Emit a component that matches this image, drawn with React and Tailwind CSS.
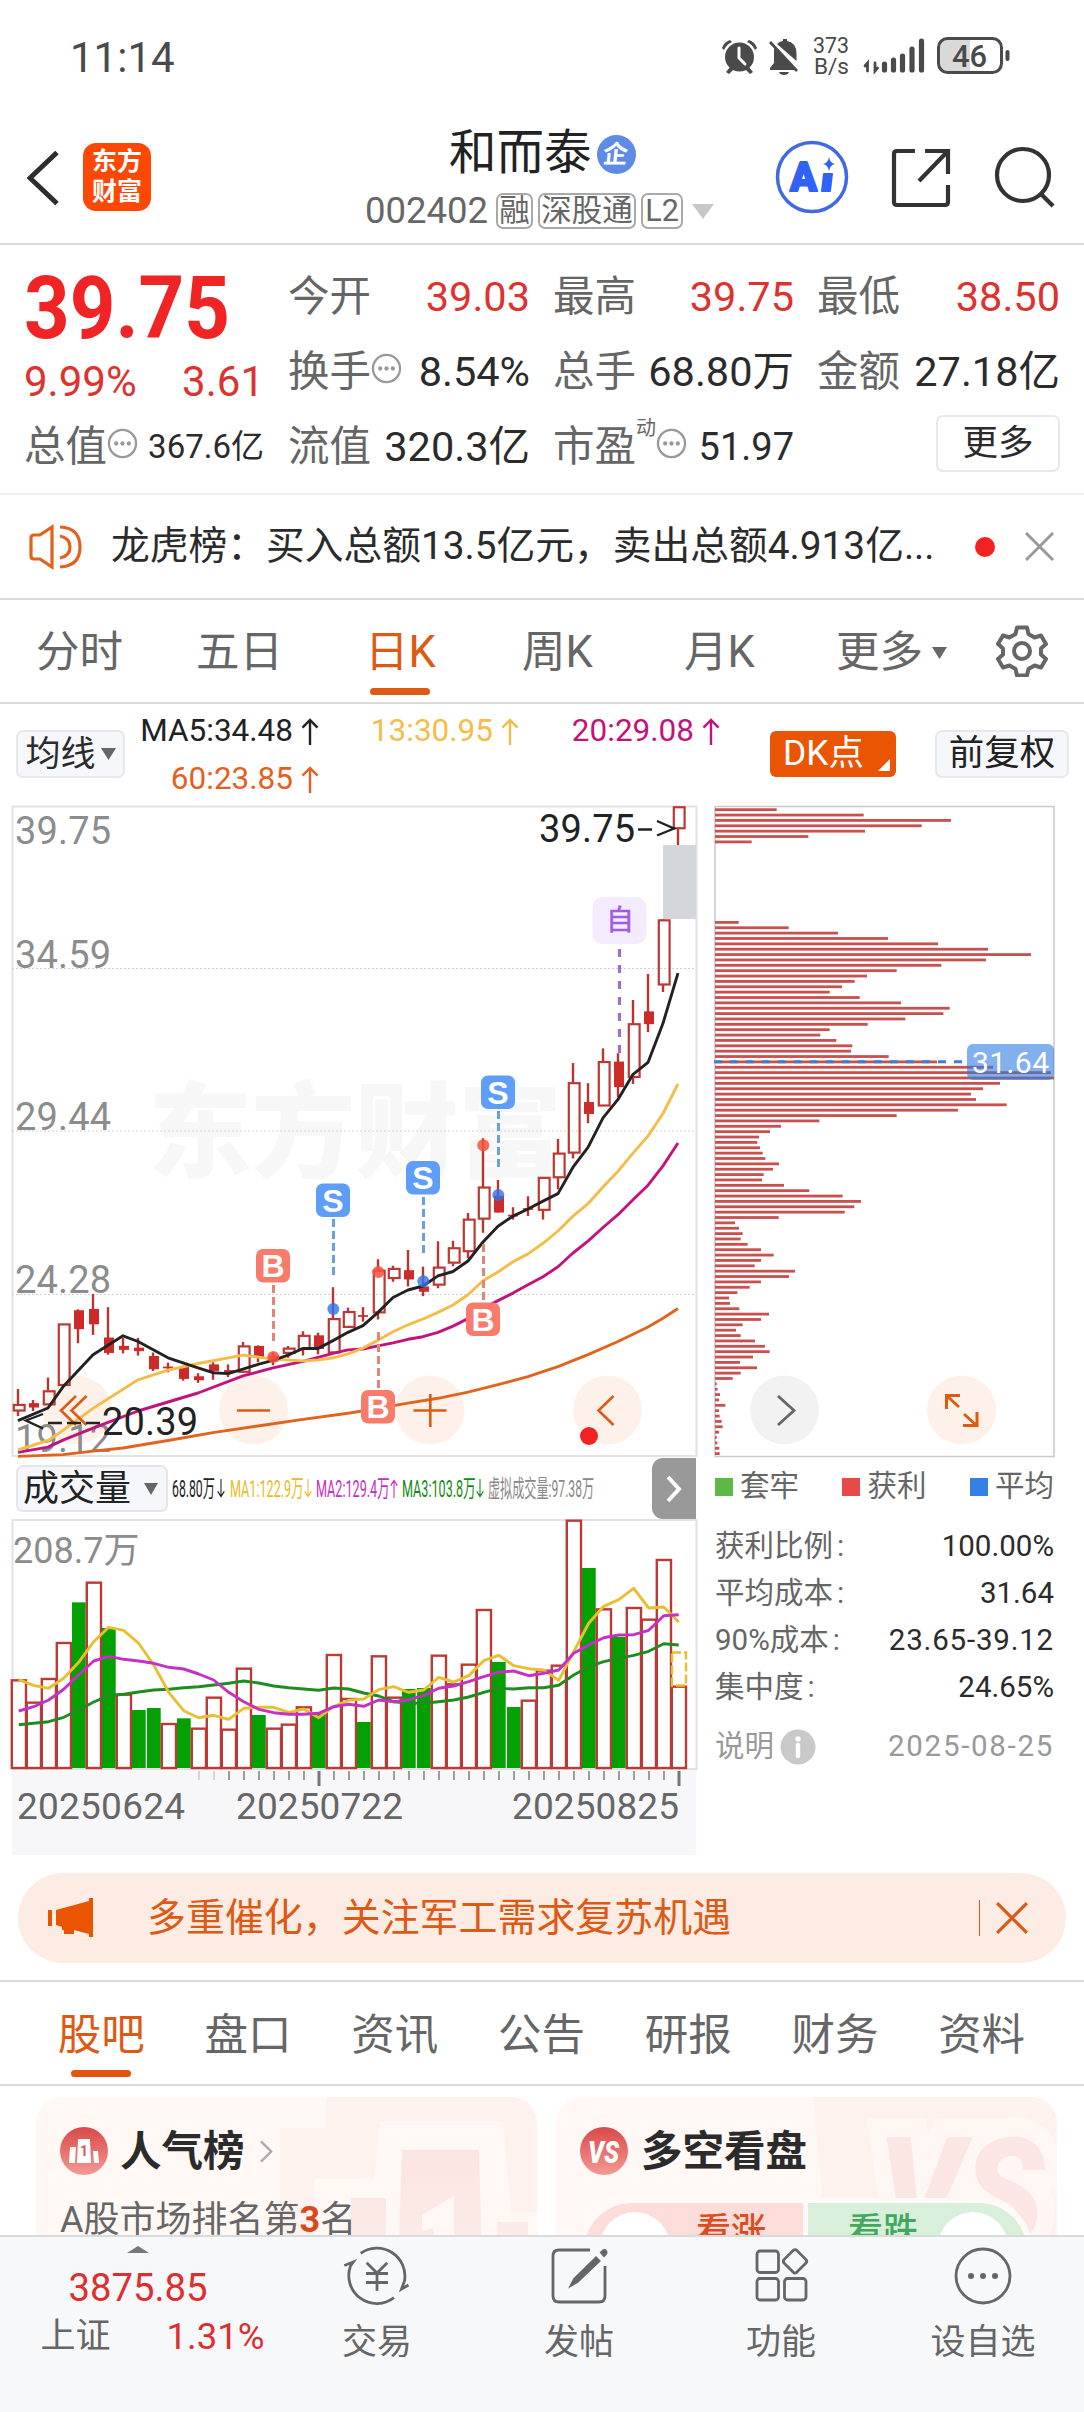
import React from "react";

const ORANGE = "#ea5504";

// [high, low, bodyTop, bodyBottom, kind]  h = hollow, f = filled
const CANDLES = [
  [1361, 1422, 1396, 1411, "h"], [1386, 1411, 1393, 1403, "f"], [1335, 1397, 1365, 1397, "h"],
  [1213, 1353, 1213, 1353, "h"], [1180, 1257, 1182, 1225, "f"], [1145, 1238, 1179, 1214, "f"],
  [1175, 1283, 1244, 1279, "f"], [1245, 1280, 1263, 1272, "f"], [1245, 1285, 1267, 1275, "f"],
  [1278, 1320, 1286, 1316, "f"], [1301, 1323, 1310, 1314, "f"], [1308, 1342, 1310, 1338, "f"],
  [1325, 1347, 1332, 1341, "f"], [1300, 1340, 1305, 1320, "f"], [1305, 1334, 1318, 1324, "f"],
  [1254, 1324, 1263, 1323, "h"], [1262, 1300, 1263, 1288, "f"], [1278, 1307, 1285, 1298, "f"],
  [1263, 1290, 1268, 1280, "h"], [1230, 1285, 1239, 1271, "h"], [1233, 1282, 1239, 1270, "f"],
  [1130, 1280, 1201, 1279, "h"], [1176, 1221, 1185, 1221, "h"], [1175, 1208, 1193, 1197, "f"],
  [1066, 1203, 1091, 1188, "h"], [1081, 1117, 1087, 1110, "h"], [1045, 1128, 1091, 1112, "f"],
  [1083, 1150, 1128, 1140, "f"], [1025, 1132, 1084, 1125, "h"], [1024, 1082, 1040, 1075, "h"],
  [961, 1064, 975, 1049, "h"], [791, 1006, 902, 975, "h"], [886, 960, 922, 960, "f"],
  [948, 976, 965, 969, "f"], [923, 968, 950, 954, "f"], [880, 976, 880, 955, "h"],
  [793, 907, 825, 881, "h"], [620, 837, 665, 825, "h"], [666, 757, 709, 736, "f"],
  [587, 718, 617, 718, "h"], [598, 698, 617, 675, "f"], [477, 668, 531, 653, "h"],
  [418, 550, 503, 532, "f"], [293, 459, 295, 443, "h"], [38, 125, 38, 88, "h"],
];

const MA5 = [[0, 1433], [2, 1404], [3, 1356], [5, 1283], [7, 1240], [8, 1253], [10, 1290], [12, 1313], [13, 1324], [14, 1326], [15, 1316], [16, 1305], [17, 1296], [18, 1284], [19, 1269], [20, 1269], [21, 1251], [22, 1232], [23, 1217], [24, 1187], [25, 1153], [26, 1136], [27, 1127], [28, 1104], [29, 1094], [30, 1070], [31, 1027], [32, 991], [33, 968], [34, 952], [35, 934], [36, 917], [37, 857], [38, 812], [39, 745], [40, 703], [41, 646], [42, 619], [43, 530], [44, 416]];
const MA13 = [[0, 1499], [2, 1478], [3, 1455], [5, 1405], [8, 1340], [10, 1318], [12, 1303], [15, 1284], [17, 1293], [19, 1297], [20, 1295], [21, 1290], [22, 1281], [23, 1268], [24, 1250], [25, 1231], [26, 1215], [27, 1202], [28, 1187], [29, 1170], [30, 1147], [31, 1115], [32, 1095], [33, 1072], [34, 1054], [35, 1030], [36, 1002], [37, 968], [38, 940], [39, 902], [40, 866], [41, 825], [42, 786], [43, 735], [44, 668]];
const MA20 = [[0, 1505], [2, 1493], [3, 1477], [5, 1450], [8, 1411], [12, 1370], [15, 1331], [17, 1313], [19, 1298], [21, 1280], [22, 1272], [23, 1270], [24, 1263], [25, 1256], [26, 1248], [27, 1242], [28, 1232], [29, 1218], [30, 1201], [31, 1178], [32, 1160], [33, 1143], [34, 1124], [35, 1106], [36, 1083], [37, 1052], [38, 1025], [39, 994], [40, 965], [41, 931], [42, 898], [43, 854], [44, 802]];
const MA60 = [[0, 1514], [3, 1510], [5, 1502], [7, 1495], [10, 1478], [13, 1460], [16, 1445], [19, 1430], [22, 1416], [24, 1405], [26, 1393], [28, 1382], [30, 1368], [32, 1351], [34, 1333], [36, 1310], [38, 1283], [40, 1253], [42, 1220], [43, 1200], [44, 1178]];

const VOLUMES = "r691 r758 r687 r579 g457 r398 g534 r734 g780 g774 r822 g805 r836 r743 r839 r656 g795 r836 r824 r772 g790 r615 r747 g816 r619 r743 g717 g714 r617 r703 r644 r480 g636 g771 r752 r662 r647 r212 g354 r478 g561 r474 r509 r330 r710".split(" ");
const VMA1 = [689, 706, 715, 685, 637, 575, 532, 541, 580, 645, 727, 782, 803, 796, 808, 775, 772, 772, 787, 777, 803, 770, 751, 747, 719, 710, 727, 720, 682, 696, 677, 632, 616, 647, 656, 660, 691, 605, 520, 469, 449, 415, 474, 471, 516];
const VMA2 = [783, 770, 750, 718, 674, 633, 619, 628, 633, 640, 652, 657, 672, 690, 727, 755, 778, 788, 793, 793, 790, 770, 763, 769, 750, 755, 749, 737, 715, 708, 695, 680, 667, 663, 677, 670, 660, 610, 585, 563, 555, 554, 541, 497, 494];
const VMA3 = [824, 820, 815, 802, 780, 756, 737, 733, 726, 720, 718, 713, 710, 705, 700, 693, 699, 708, 713, 717, 721, 714, 717, 729, 738, 755, 759, 760, 755, 750, 741, 727, 715, 717, 713, 713, 706, 675, 650, 635, 625, 616, 604, 581, 585];

const CHIPS_TOP = [230, 491, 753, 665, 495, 325, 155];
const CHIPS = [116, 266, 414, 564, 714, 864, 993, 858, 724, 590, 501, 464, 426, 389, 479, 603, 749, 730, 616, 503, 389, 361, 409, 457, 453, 566, 711, 879, 1053, 1062, 900, 849, 813, 828, 920, 774, 590, 358, 243, 210, 177, 172, 180, 188, 196, 237, 219, 191, 186, 252, 328, 428, 483, 463, 434, 236, 105, 117, 128, 122, 143, 183, 221, 183, 164, 285, 267, 183, 149, 112, 87, 90, 118, 207, 183, 128, 108, 122, 165, 195, 209, 159, 120, 171, 122, 98, 50, 53, 60, 57, 76, 57, 59, 65, 68, 57, 50, 52, 58, 59];

const py = (v) => 790 + v / 2.272;
const vy = (v) => 1450 + v / 3;
const cx = (i) => 18 + 15 * i;
const pricePts = (a) => a.map(([i, v]) => `${cx(i)},${py(v).toFixed(1)}`).join(" ");
const volPts = (a) => a.map((v, i) => `${cx(i) + 0.7},${vy(v).toFixed(1)}`).join(" ");

function Arrow({ up = true, className = "" }) {
  return (
    <svg viewBox="0 0 18 28" preserveAspectRatio="none" className={className} fill="none" stroke="currentColor" strokeWidth="2.4">
      {up ? <path d="M9 28V2M1.5 10L9 2l7.5 8" /> : <path d="M9 0v26M1.5 18L9 26l7.5-8" />}
    </svg>
  );
}

function Down({ className = "" }) {
  return (
    <svg viewBox="0 0 10 8" preserveAspectRatio="none" className={className} fill="currentColor">
      <path d="M0 0h10L5 8z" />
    </svg>
  );
}

function Dots() {
  return (
    <svg viewBox="0 0 32 32" className="h-[31px] w-[31px] shrink-0" fill="none" stroke="#999" strokeWidth="2.4">
      <circle cx="16" cy="16" r="14" />
      <g fill="#999" stroke="none"><circle cx="9.5" cy="16" r="2.200" /><circle cx="16" cy="16" r="2.200" /><circle cx="22.5" cy="16" r="2.200" /></g>
    </svg>
  );
}

function Close({ className = "" }) {
  return (
    <svg viewBox="0 0 30 30" className={className} fill="none" stroke="currentColor" strokeWidth="3">
      <path d="M1 1l28 28M29 1L1 29" />
    </svg>
  );
}

function StatusBar() {
  return (
    <div className="flex h-[110px] items-start text-[#4a4a4a]">
      <div className="mt-[37px] ml-[70px] text-[42px] leading-none">11:14</div>
      <svg viewBox="720 32 300 46" className="mt-[32px] ml-auto mr-[64px] h-[46px] w-[300px] shrink-0">
        <g fill="#4a4a4a">
          <circle cx="739.5" cy="57" r="14.5" />
          <path d="M722 48q2-6 8-8l2 2q-5 2-8 8zM757 48q-2-6-8-8l-2 2q5 2 8 8zM726 72l5-6 3 3-5 5zM753 72l-5-6-3 3 5 5z" />
          <path d="M739 48v10l6 6" fill="none" stroke="#fff" strokeWidth="3" strokeLinecap="round" />
          <path d="M774 48L797 70h-27v-2l4-5zM777 44q3-3 6-3v-2h4v2q10 2 9.500 13v7z M779 72h10q-1 3-5 3t-5-3z" />
          <path d="M771 41L798 70l-2 2L769 43z" />
        </g>
        <text x="813" y="53" fontSize="22.500" textLength="36" lengthAdjust="spacingAndGlyphs" fill="#4a4a4a">373</text>
        <text x="814" y="74" fontSize="22.500" textLength="35" lengthAdjust="spacingAndGlyphs" fill="#4a4a4a">B/s</text>
        <g stroke="#4a4a4a" strokeLinecap="round" fill="none">
          <path d="M867.500 71v-8l-2.500 3M875 63v8l2.500-3" strokeWidth="2.8" />
          <path d="M884.500 70v-6M893.500 70v-10M902.500 70V56M912 70V49M921.500 70V41" strokeWidth="5.200" />
        </g>
        <path d="M946 39h24v33h-24q-7 0-7-7V46q0-7 7-7z" fill="#d9d9d9" />
        <rect x="938.500" y="38.500" width="63" height="34" rx="9" fill="none" stroke="#4a4a4a" strokeWidth="3" />
        <rect x="1005.500" y="50" width="4" height="11" rx="2" fill="#4a4a4a" />
        <text x="969.500" y="66.500" fontSize="31" fontWeight="500" textAnchor="middle" fill="#4a4a4a">46</text>
      </svg>
    </div>
  );
}

function Header() {
  const tag = "flex h-[36px] items-center justify-center rounded-[7px] border-2 border-[#a9a9a9] text-[30.5px] leading-none";
  return (
    <div className="flex h-[135px] items-start border-b-2 border-[#dadada]">
      <svg viewBox="0 0 32 54" className="mt-[41px] ml-[27px] h-[54px] w-[32px]" fill="none" stroke="#2d2d2d" strokeWidth="5"><path d="M30 1.500L3 27l27 25.500" /></svg>
      <div className="mt-[33px] ml-[24px] flex h-[68px] w-[68px] flex-col items-center justify-center rounded-[13px] bg-[#fb4805] text-[25px] font-bold leading-[30px] text-white">
        <span>东方</span><span>财富</span>
      </div>
      <div className="ml-[212px] mt-[16px] flex w-[360px] flex-col">
        <div className="ml-[86px] flex h-[56px] items-center">
          <span className="text-[47.500px] leading-none text-[#222]">和而泰</span>
          <span className="ml-[5px] flex h-[39px] w-[39px] items-center justify-center rounded-full bg-[#5e8be6] text-[25px] font-bold leading-none text-white"><span className="-skew-x-6">企</span></span>
        </div>
        <div className="ml-[2px] mt-[10px] flex h-[38px] items-center text-[#666]">
          <span className="w-[131px] text-[36.500px] leading-none">002402</span>
          <span className={tag + " w-[37px]"}>融</span>
          <span className={tag + " ml-[5px] w-[98px]"}>深股通</span>
          <span className={tag + " ml-[5px] w-[42px]"}>L2</span>
          <Down className="ml-[9px] h-[15px] w-[22px] text-[#c8c8c8]" />
        </div>
      </div>
      <svg viewBox="0 0 74 74" className="mt-[30px] ml-[52px] h-[74px] w-[74px]">
        <circle cx="37" cy="37" r="34.500" fill="#fff" stroke="#4169e1" strokeWidth="3.500" />
        <text x="15" y="51" fontSize="40" fontWeight="900" fill="#2f62f5" stroke="#2f62f5" strokeWidth="2" strokeLinejoin="round" textLength="27" lengthAdjust="spacingAndGlyphs">A</text>
        <path d="M49 34h8l-2 17h-8z" fill="#2f62f5" stroke="#2f62f5" strokeWidth="2" strokeLinejoin="round" />
        <path d="M54 17q1 6 6 7-5 1-6 7-1-6-6-7 5-1 6-7z" fill="#2f62f5" />
      </svg>
      <svg viewBox="0 0 60 60" className="mt-[38px] ml-[42px] h-[60px] w-[60px]" fill="none" stroke="#333" strokeWidth="4.200">
        <path d="M24 3H6q-3 0-3 3v48q0 3 3 3h48q3 0 3-3V37M34 3h23v23M57 3L28 33" />
      </svg>
      <svg viewBox="0 0 62 62" className="mt-[36px] ml-[43px] h-[62px] w-[62px]" fill="none" stroke="#333" strokeWidth="4.200">
        <circle cx="29" cy="29" r="26" /><path d="M47 48l12 12" />
      </svg>
    </div>
  );
}

function Cell({ label, value, red, info, vc = "" }) {
  return (
    <div className="flex h-[75px] items-center">
      <span className="text-[41.500px] leading-none text-[#666]">{label}</span>
      {info && <span className="-mt-[6px] flex"><Dots /></span>}
      <span className={(vc || "text-[41.500px]") + " ml-auto leading-none whitespace-nowrap " + (red ? "text-[#dd3330]" : "text-[#2b2b2b]")}>{value}</span>
    </div>
  );
}

function Stats() {
  return (
    <div className="grid h-[250px] grid-cols-[264px_265px_265px_auto] border-b-2 border-[#ececec] pl-[24px] pr-[24px] pt-[14px]">
      <div className="w-[240px]">
        <div className="flex h-[94px] items-center pt-[4px]">
          <span className="origin-left scale-x-[0.905] text-[88px] font-bold leading-none text-[#f02424]">39.75</span>
        </div>
        <div className="flex h-[56px] items-center justify-between pt-[2px] text-[42px] leading-none text-[#dd3330]"><span>9.99%</span><span>3.61</span></div>
        <Cell label="总值" value="367.6亿" info vc="text-[33px]" />
      </div>
      <div className="w-[242px]">
        <Cell label="今开" value="39.03" red />
        <Cell label="换手" value="8.54%" info />
        <Cell label="流值" value="320.3亿" />
      </div>
      <div className="w-[241px]">
        <Cell label="最高" value="39.75" red />
        <Cell label="总手" value="68.80万" />
        <div className="flex h-[75px] items-center">
          <span className="text-[41.500px] leading-none text-[#666]">市盈</span>
          <span className="-mt-[38px] text-[20px] leading-none text-[#666]">动</span>
          <span className="-mt-[6px] flex"><Dots /></span>
          <span className="ml-auto text-[38px] leading-none text-[#2b2b2b]">51.97</span>
        </div>
      </div>
      <div className="ml-[-1px] w-[243px]">
        <Cell label="最低" value="38.50" red />
        <Cell label="金额" value="27.18亿" />
        <div className="flex h-[75px] items-center justify-end">
          <div className="mt-[-6px] flex h-[57px] w-[124px] items-center justify-center rounded-[7px] border-2 border-[#e8e8e8] text-[35.500px] leading-none text-[#2b2b2b]">更多</div>
        </div>
      </div>
    </div>
  );
}

function Notice() {
  return (
    <div className="flex h-[105px] items-center border-b-2 border-[#dadada] pl-[29px] pr-[30px]">
      <svg viewBox="0 0 54 46" className="h-[46px] w-[54px]" fill="none" stroke="#e2621c" strokeWidth="3.2">
        <path d="M23 3L11 11H5q-3 0-3 3v18q0 3 3 3h6l12 8zM31 3q20 1 20 20T31 43M31 12q10 2 10 11T31 34" />
      </svg>
      <span className="ml-[28px] w-[861px] text-[38.750px] leading-none whitespace-nowrap text-[#2b2b2b]">龙虎榜：买入总额13.5亿元，卖出总额4.913亿...</span>
      <span className="ml-[3px] h-[20px] w-[20px] rounded-full bg-[#f52222]" />
      <Close className="ml-auto h-[29px] w-[29px] text-[#999]" />
    </div>
  );
}

function Periods() {
  return (
    <div className="flex h-[104px] items-center border-b-2 border-[#dadada] pt-[3px] pl-[36px] text-[43.500px] leading-none text-[#666]">
      <span className="w-[160px]">分时</span>
      <span className="w-[169px]">五日</span>
      <span className="relative w-[157px] text-[#de5a14]">
        日K
        <span className="absolute -bottom-[21px] left-[5px] h-[7px] w-[60px] rounded-full bg-[#de5a14]" />
      </span>
      <span className="w-[162px]">周K</span>
      <span className="w-[152px]">月K</span>
      <span>更多</span>
      <Down className="ml-[9px] h-[12px] w-[15px]" />
      <svg viewBox="0 0 52 52" className="-mt-[3px] ml-[49px] h-[52px] w-[52px]" fill="none" stroke="#666" strokeWidth="4" strokeLinejoin="round">
        <path d="M21 2.500h10l1.500 6.500 6 3.500 6.500-2 5 8.500-5 4.500v6l5 4.500-5 8.500-6.500-2-6 3.500-1.500 6.500H21l-1.500-6.500-6-3.500-6.500 2-5-8.500 5-4.500v-6l-5-4.500 5-8.500 6.500 2 6-3.500z" />
        <circle cx="26" cy="26" r="8" />
      </svg>
    </div>
  );
}

function Indicators() {
  const item = "flex items-center justify-end";
  return (
    <div className="flex h-[102px] text-[31.500px] leading-none">
      <div className="mt-[26px] ml-[16px] flex h-[48px] w-[109px] items-center justify-center gap-[5px] rounded-[7px] border-2 border-[#e6e8ea] bg-[#f6f7fa] text-[35px] text-[#2b2b2b]">
        均线<Down className="h-[12px] w-[15px] text-[#666]" />
      </div>
      <div className="mt-[3px] ml-[15px] grid h-[96px] w-[580px] grid-cols-[179px_200px_201px] grid-rows-2">
        <div className={item + " text-[#222]"}>MA5:34.48<Arrow className="ml-[8px] h-[27px] w-[18px]" /></div>
        <div className={item + " text-[#f2bd48]"}>13:30.95<Arrow className="ml-[8px] h-[27px] w-[18px]" /></div>
        <div className={item + " text-[#c4127d]"}>20:29.08<Arrow className="ml-[8px] h-[27px] w-[18px]" /></div>
        <div className={item + " text-[#e56020]"}>60:23.85<Arrow className="ml-[8px] h-[27px] w-[18px]" /></div>
      </div>
      <div className="relative mt-[27px] ml-[50px] flex h-[46px] w-[126px] items-center rounded-[6px] bg-[#ea5504] pl-[13px] text-[35.5px] text-white">
        DK点
        <span className="absolute right-[6px] bottom-[6px] h-[12px] w-[12px] bg-white [clip-path:polygon(100%_0,100%_100%,0_100%)]" />
      </div>
      <div className="mt-[26px] ml-[39px] flex h-[48px] w-[134px] items-center justify-center rounded-[7px] border-2 border-[#e6e8ea] bg-[#f6f7fa] text-[35.500px] text-[#222]">前复权</div>
    </div>
  );
}

function Flag({ i, top, from, to, t }) {
  const c = t === "S" ? "#5e9df8" : "#f87b6b";
  return (
    <g>
      <path d={`M${cx(i) + 0.5} ${from}V${to}`} stroke={t === "S" ? "#6ba0e0" : "#e28578"} strokeWidth="3" strokeDasharray="8 4" />
      <rect x={cx(i) - 17} y={top} width="34" height="33.500" rx="7" fill={c} />
      <text x={cx(i)} y={top + 28} textAnchor="middle" fontSize="32" fontWeight="700" fill="#fff" fontFamily="Liberation Sans">{t}</text>
    </g>
  );
}

function PriceChart() {
  const labels = [["39.75", 843.5], ["34.59", 968], ["29.44", 1130], ["24.28", 1293], ["19.12", 1452]];
  return (
    <svg viewBox="0 805 704 653" className="block h-[653px] w-[704px]">
      <text x="148" y="1170" fontSize="104" fontWeight="900" fill="#f7f7f7" textLength="414">东方财富</text>
      <path d="M12.500 806.500H696.500V1456H12.500z" fill="none" stroke="#e2e2e2" strokeWidth="2" />
      <path d="M12 968.500H696M12 1131H696M12 1294.500H696" stroke="#d2d2d2" strokeWidth="1.200" strokeDasharray="2 2" />
      {[77, 253.500, 430, 607.500].map((x) => <circle key={x} cx={x} cy="1410" r="34.500" fill="#fef1e9" />)}
      {labels.map(([t, y]) => <text key={t} x="15" y={y} fontSize="38" fill="#8c8c8c" textLength="96">{t}</text>)}
      <rect x="663" y="845" width="33" height="74" fill="#d3d7db" />
      {CANDLES.map(([h, l, a, b, k], i) => (
        <g key={i}>
          <path d={k === "h" ? `M${cx(i)} ${py(h)}V${py(a)}M${cx(i)} ${py(b)}V${py(l)}` : `M${cx(i)} ${py(h)}V${py(l)}`} stroke="#b83531" strokeWidth="2.400" />
          {k === "h"
            ? <rect x={cx(i) - 4.200} y={py(a) + 0.5} width="10.800" height={Math.max(1, py(b) - py(a) - 1)} fill="none" stroke="#bb3834" strokeWidth="2.200" />
            : <rect x={cx(i) - (b - a < 6 ? 5 : 4)} y={py(a)} width="10" height={(b - a) / 2.272} fill="#cd2a2a" />}
        </g>
      ))}
      <g fill="none" strokeWidth="2.900" strokeLinejoin="round">
        <polyline points={pricePts(MA60)} stroke="#e2631e" />
        <polyline points={pricePts(MA20)} stroke="#c4127d" />
        <polyline points={pricePts(MA13)} stroke="#f2bd48" />
        <polyline points={pricePts(MA5)} stroke="#222" />
      </g>
      {[[17, 1288], [24, 1095], [31, 807]].map(([i, v]) => <circle key={i} cx={cx(i) + 0.3} cy={py(v)} r="6" fill="#f8503c" opacity=".85" />)}
      {[[21, 1179], [27, 1116], [32, 920]].map(([i, v]) => <circle key={i} cx={cx(i) + 0.3} cy={py(v)} r="6" fill="#2f74e8" opacity=".8" />)}
      <Flag i={17} top={1249} from={1285} to={1341} t="B" />
      <Flag i={21} top={1183.5} from={1219} to={1275} t="S" />
      <Flag i={27} top={1161} from={1197} to={1253} t="S" />
      <Flag i={32} top={1075.5} from={1111} to={1167} t="S" />
      <Flag i={24} top={1390} from={1332} to={1388} t="B" />
      <Flag i={31} top={1302.5} from={1244} to={1300} t="B" />
      <path d="M619.500 949V1053" stroke="#a368dc" strokeWidth="3" strokeDasharray="8 8" />
      <rect x="592.500" y="897" width="54" height="47" rx="10" fill="#f4ebfe" />
      <text x="620" y="930" fontSize="28" textAnchor="middle" fill="#a05ce8" stroke="#a05ce8" strokeWidth=".5">自</text>
      <g fill="none" stroke="#de5a14" strokeWidth="2.600">
        <path d="M76 1396l-15 14.500 15 14.500M86.500 1396l-15 14.500 15 14.500M237 1410.500h33M413.500 1410.500h33M430.300 1394v33M613.500 1396l-15 14.500 15 14.500" />
      </g>
      <circle cx="589" cy="1436" r="9" fill="#f12222" />
      <path d="M43 1414l-17 6.500 17 8M48 1423h14M67 1423h14M86 1423h14" fill="none" stroke="#222" strokeWidth="2.400" />
      <text x="102" y="1435" fontSize="38" fill="#222" textLength="96">20.39</text>
      <text x="539" y="841.500" fontSize="38" fill="#222" textLength="96">39.75</text>
      <path d="M638 829.500h14M657 821l17 7.500-17 7" fill="none" stroke="#222" strokeWidth="2.400" />
    </svg>
  );
}

function Squeezed({ text, dir, color, w, tw, scale }) {
  return (
    <div className={"flex shrink-0 items-center " + color + " " + w}>
      <div className={tw + " h-[24px]"}><span className={"block origin-left text-[24px] leading-none whitespace-nowrap " + scale}>{text}</span></div>
      {dir && <Arrow up={dir === "up"} className="h-[19px] w-[8px]" />}
    </div>
  );
}

function VolumeHeader() {
  return (
    <div className="flex h-[61px] w-[696px] items-center">
      <div className="ml-[16px] flex h-[47px] w-[152px] shrink-0 items-center rounded-[7px] border-2 border-[#e4e7ea] bg-[#f6f7fa] pl-[5px] text-[36px] leading-none text-[#222]">
        成交量<Down className="ml-[13px] h-[12px] w-[14px] text-[#666]" />
      </div>
      <div className="ml-[4px] flex">
        <Squeezed text="68.80万" dir="down" color="text-[#222]" w="w-[58px]" tw="w-[45px]" scale="scale-x-[0.51]" />
        <Squeezed text="MA1:122.9万" dir="down" color="text-[#e8bb28]" w="w-[86px]" tw="w-[74px]" scale="scale-x-[0.525]" />
        <Squeezed text="MA2:129.4万" dir="up" color="text-[#c030c8]" w="w-[86px]" tw="w-[74px]" scale="scale-x-[0.525]" />
        <Squeezed text="MA3:103.8万" dir="down" color="text-[#148a14]" w="w-[86px]" tw="w-[74px]" scale="scale-x-[0.525]" />
        <Squeezed text="虚拟成交量:97.38万" color="text-[#888]" w="w-[110px]" tw="w-[110px]" scale="scale-x-[0.505]" />
      </div>
      <div className="ml-auto flex h-[61px] w-[44px] shrink-0 items-center justify-center rounded-l-[11px] bg-[#999]">
        <svg viewBox="0 0 16 28" className="h-[28px] w-[16px]" fill="none" stroke="#fff" strokeWidth="4"><path d="M2 2l11 12L2 26" /></svg>
      </div>
    </div>
  );
}

function VolumeChart() {
  return (
    <svg viewBox="0 1519 704 336" className="block h-[336px] w-[704px]">
      <rect x="12" y="1769" width="684.500" height="86" fill="#f7f7fa" />
      <path d="M12.500 1520H696.500V1769H12.500z" fill="#fff" stroke="#e2e2e2" strokeWidth="2" />
      <text x="13" y="1563" fontSize="36" fill="#8c8c8c">208.7万</text>
      {VOLUMES.map((s, i) => {
        const y = vy(+s.slice(1));
        return s[0] === "g"
          ? <rect key={i} x={cx(i) - 6} y={y} width="13.700" height={1768 - y} fill="#02a002" />
          : <rect key={i} x={cx(i) - 6.200} y={y} width="14.200" height={1768 - y} fill="#fff" stroke="#bb3a36" strokeWidth="2.400" />;
      })}
      <rect x="672" y="1652.500" width="14" height="33" fill="none" stroke="#eebd2a" strokeWidth="2.400" strokeDasharray="9 3" />
      <g fill="none" strokeWidth="2.900" strokeLinejoin="round">
        <polyline points={volPts(VMA3)} stroke="#1f8c1f" />
        <polyline points={volPts(VMA1)} stroke="#e8bf30" />
        <polyline points={volPts(VMA2)} stroke="#c432c4" />
      </g>
      {Array.from({ length: 33 }, (_, k) => k + 12).map((i) => (
        <path key={i} d={`M${cx(i) + 1} 1771V${i === 20 || i === 44 ? 1786 : 1780}`} stroke={i < 14 ? "#c8c8c8" : "#777"} strokeWidth={i === 20 || i === 44 ? 3 : 1.4} />
      ))}
      <g fontSize="37" fill="#666">
        <text x="17" y="1818.500" textLength="168">20250624</text>
        <text x="236" y="1818.500" textLength="167">20250722</text>
        <text x="512" y="1818.500" textLength="167">20250825</text>
      </g>
    </svg>
  );
}

function ChipChart() {
  const row = (end, n) => <rect key={n} x="715" y={808.3 + n * 5.366} width={end / 3 - 15} height="2.800" fill="#c8504e" />;
  return (
    <svg viewBox="704 805 380 653" className="block h-[653px] w-[380px]">
      <path d="M715 806.500H1054V1456.500H715z" fill="none" stroke="#cbcbcb" strokeWidth="1.600" />
      {CHIPS_TOP.map((e, n) => row(e, n))}
      {CHIPS.map((e, n) => row(e, n + 21))}
      <path d="M714 1061.800H963" stroke="#3f7fd0" strokeWidth="3" strokeDasharray="8 8" />
      <rect x="967" y="1044" width="87" height="36" rx="6" fill="#2f7ce0" opacity=".6" />
      <text x="972" y="1072.500" fontSize="30" fill="#fff" textLength="77">31.64</text>
      <circle cx="784.500" cy="1410" r="34.500" fill="#f2f2f2" />
      <circle cx="961.500" cy="1410" r="34.500" fill="#fef1e9" />
      <path d="M778 1396l16 14.500-16 14.500" fill="none" stroke="#666" strokeWidth="2.800" />
      <path d="M946.500 1409v-13.500H960M947 1396l12 11M964 1414l12 11M977 1412v13.500h-14" fill="none" stroke="#de5a14" strokeWidth="3" />
    </svg>
  );
}

function ChipInfo() {
  const rows = [["获利比例", "100.00%", ""], ["平均成本", "31.64", ""], ["90%成本", "23.65-39.12", " tracking-[0.8px]"], ["集中度", "24.65%", ""]];
  const legend = [["套牢", "bg-[#5cb946]"], ["获利", "bg-[#e84a4a]"], ["平均", "bg-[#3381e2]"]];
  return (
    <div className="pl-[11px] pr-[30px] text-[29.500px] leading-none text-[#666]">
      <div className="flex h-[58px] items-center justify-between">
        {legend.map(([t, c]) => (
          <span key={t} className="flex items-center gap-[7px]"><i className={"h-[18px] w-[18px] " + c} /><span>{t}</span></span>
        ))}
      </div>
      <div className="mt-[7px]">
        {rows.map(([a, b, s]) => (
          <div key={a} className="flex h-[47px] items-center"><span>{a}</span><span className="ml-[4px]">:</span><span className={"ml-auto text-[#2b2b2b]" + s}>{b}</span></div>
        ))}
      </div>
      <div className="mt-[12px] flex h-[48px] items-center text-[#999]">
        <span>说明</span>
        <svg viewBox="0 0 36 36" className="ml-[6px] h-[36px] w-[36px]"><circle cx="18" cy="18" r="17.500" fill="#c9c9c9" /><circle cx="18" cy="10" r="2.700" fill="#fff" /><path d="M18 16v11" stroke="#fff" strokeWidth="4.500" strokeLinecap="round" /></svg>
        <span className="ml-auto tracking-[1.7px]">2025-08-25</span>
      </div>
    </div>
  );
}

function Banner() {
  return (
    <div className="mx-[18px] mt-[19px] flex h-[90px] items-center rounded-full bg-[#fcece3] pl-[29px] pr-[38px] text-[#dd5a16]">
      <svg viewBox="0 0 48 40" className="h-[40px] w-[48px]" fill={ORANGE}>
        <path d="M1 12h4v16H1zM9 12L42 3V0h4v39h-4v-3l-15-4v4H17v-4h-2v-3l-6-2z" />
      </svg>
      <span className="ml-[52px] text-[38.950px] leading-none">多重催化，关注军工需求复苏机遇</span>
      <span className="ml-auto h-[36px] w-[1.500px] bg-[#dd5a16]" />
      <Close className="ml-[16px] h-[32px] w-[32px]" />
    </div>
  );
}

function Tabs() {
  return (
    <div className="mt-[17px] grid h-[106px] grid-cols-7 border-y-2 border-[#dadada] pr-[29px] pl-[28px] text-[43.500px] leading-none text-[#666]">
      {["股吧", "盘口", "资讯", "公告", "研报", "财务", "资料"].map((t, i) => (
        <div key={t} className={"relative flex items-center justify-center pt-[5px] " + (i === 0 ? "text-[#de5a14]" : "")}>
          {t}
          {i === 0 && <span className="absolute bottom-[7px] h-[7px] w-[60px] rounded-full bg-[#e2550f]" />}
        </div>
      ))}
    </div>
  );
}

function Cards() {
  const card = "relative h-[200px] overflow-hidden rounded-t-[26px] bg-[#fff8f5]";
  return (
    <div className="flex h-[149px] gap-[19px] overflow-hidden pt-[11px] pl-[36px]">
      <div className={card + " w-[501px]"}>
        <svg viewBox="0 0 501 200" className="absolute inset-0 h-full w-full">
          <defs>
            <linearGradient id="podium" x2="0" y2="1"><stop stopColor="#fbe5e2" /><stop offset="1" stopColor="#fdeeeb" /></linearGradient>
          </defs>
          <path d="M290 0H501V200H244V31H290z" fill="#fef2ef" />
          <path d="M344 24H467L475 115H501V200H279V82H338z" fill="#fff8f5" />
          <path d="M366 53H443L447 200H361zM315 101H350V200H313zM461 125H492V200H461z" fill="url(#podium)" />
          <path d="M386 118L418 99V200H398V131L386 134z" fill="#fff8f5" />
        </svg>
        <div className="relative mt-[24px] ml-[24px] flex h-[60px] items-center">
          <svg viewBox="0 0 48 48" className="h-[48px] w-[48px]">
            <defs><linearGradient id="rank" x2="0" y2="1"><stop stopColor="#d9484a" /><stop offset="1" stopColor="#f39a93" /></linearGradient></defs>
            <circle cx="24" cy="24" r="24" fill="url(#rank)" />
            <path d="M10 20h6l-1 16H9zM18 12h12l1 24H17zM33 24h5l1 12h-5z" fill="#fff" />
            <text x="24" y="29" fontSize="14" fontWeight="700" textAnchor="middle" fill="#dd5552">1</text>
          </svg>
          <span className="ml-[12px] pt-[2px] text-[41.500px] font-bold leading-none text-[#2b2b2b]">人气榜</span>
          <svg viewBox="0 0 14 24" className="ml-[15px] h-[23px] w-[13px]" fill="none" stroke="#aaa" strokeWidth="2.600"><path d="M1 1l11 11L1 23" /></svg>
        </div>
        <div className="relative mt-[21px] ml-[24px] text-[36px] leading-none whitespace-nowrap text-[#666]">A股市场排名第<b className="text-[#d84a1c]">3</b>名</div>
      </div>
      <div className={card + " w-[501px]"}>
        <svg viewBox="0 0 501 200" className="absolute inset-0 h-full w-full">
          <path d="M257 0H501V200H275z" fill="#fef2ef" />
          <text x="322" y="147" fontSize="150" fontWeight="900" fontStyle="italic" fill="#fce6e4" stroke="#fff7f4" strokeWidth="38" paintOrder="stroke" textLength="166" lengthAdjust="spacingAndGlyphs">VS</text>
        </svg>
        <div className="relative mt-[24px] ml-[24px] flex h-[60px] items-center">
          <svg viewBox="0 0 48 48" className="h-[48px] w-[48px]">
            <circle cx="24" cy="24" r="24" fill="url(#rank)" />
            <text x="8" y="36" fontSize="32" fontWeight="900" fontStyle="italic" fill="#fff" textLength="31" lengthAdjust="spacingAndGlyphs">VS</text>
          </svg>
          <span className="ml-[13px] pt-[2px] text-[41.500px] font-bold leading-none text-[#2b2b2b]">多空看盘</span>
        </div>
        <div className="relative mt-[17px] ml-[23px] flex h-[90px] w-[453px] gap-[5px] rounded-t-[50px] bg-[#fffaf8] p-[5px] text-[35px] font-medium leading-none">
          <div className="flex flex-1 rounded-tl-[48px] bg-[#fdddda] pt-[9px] text-[#dc4c20]">
            <span className="ml-[16px] h-[70px] w-[70px] rounded-full bg-white" /><span className="ml-[26px] pt-[2px]">看涨</span>
          </div>
          <div className="flex flex-1 rounded-tr-[48px] bg-[#d8efdc] pt-[9px] text-[#42a95c]">
            <span className="ml-[40px] pt-[2px]">看跌</span><span className="ml-[20px] h-[70px] w-[70px] rounded-full bg-white" />
          </div>
        </div>
      </div>
    </div>
  );
}

function NavItem({ label, children }) {
  return (
    <div className="flex w-[202px] flex-col items-center pt-[7px]">
      <svg viewBox="0 0 64 64" className="h-[64px] w-[64px] overflow-visible" fill="none" stroke="#666" strokeWidth="2.800">{children}</svg>
      <span className="mt-[17px] text-[35px] leading-none text-[#666]">{label}</span>
    </div>
  );
}

function BottomNav() {
  return (
    <div className="flex h-[177px] shrink-0 border-t-2 border-[#d8dadc] bg-[#f7f8fa]">
      <div className="flex w-[276px] flex-col items-center pt-[9px]">
        <svg viewBox="0 0 22 7" className="h-[7px] w-[22px]" fill="#777"><path d="M0 7L11 0l11 7z" /></svg>
        <span className="mt-[16px] text-[38.300px] leading-none text-[#dd2f2f]">3875.85</span>
        <div className="mt-[12px] ml-[29px] flex w-full justify-between pr-[10px] pl-[26px] text-[36.500px] leading-none">
          <span className="text-[35px] text-[#666]">上证</span><span className="mr-[16px] text-[#dd2f2f]">1.31%</span>
        </div>
      </div>
      <NavItem label="交易">
        <path d="M15.700 9.300A28 28 0 0 1 59.500 37L56.500 45l7-4M49 53.700A28 28 0 0 1 5.500 22L8.300 18l-9 3.500M21.700 18.700L32 29l10.300-10.300M32 29v17.700M21 29.500h22M21 38.500h22" />
      </NavItem>
      <NavItem label="发帖">
        <path d="M43 6H12q-6 0-6 6v40q0 6 6 6h40q6 0 6-6V22" />
        <path d="M49 13.500L27 35l-3.500 7 7-4L52.500 17zM54 8.500l2-2q2-1 3 .5t0 3l-2 2z" fill="#666" strokeWidth="2" />
      </NavItem>
      <NavItem label="功能">
        <rect x="8" y="7" width="21.500" height="21.500" rx="3" /><rect x="8" y="34.500" width="21.500" height="21.500" rx="3" /><rect x="35.500" y="34.500" width="21.500" height="21.500" rx="3" />
        <path d="M44.300 6.300q1.700-1.400 3.400 0l9.300 9.300q1.500 1.700 0 3.400l-9.300 9.300q-1.700 1.400-3.400 0L35 19q-1.400-1.700 0-3.400z" />
      </NavItem>
      <NavItem label="设自选">
        <circle cx="32" cy="32" r="27" />
        <g fill="#666" stroke="none"><circle cx="20" cy="32" r="3" /><circle cx="32" cy="32" r="3" /><circle cx="44" cy="32" r="3" /></g>
      </NavItem>
    </div>
  );
}

export default function App() {
  return (
    <div className="flex h-[2412px] w-[1084px] flex-col overflow-hidden bg-white font-['Roboto','Noto_Sans_CJK_SC',sans-serif]">
      <StatusBar />
      <Header />
      <Stats />
      <Notice />
      <Periods />
      <Indicators />
      <div className="flex h-[1049px] -mt-px">
        <div className="w-[704px]">
          <PriceChart />
          <VolumeHeader />
          <VolumeChart />
        </div>
        <div className="w-[380px]">
          <ChipChart />
          <ChipInfo />
        </div>
      </div>
      <Banner />
      <Tabs />
      <Cards />
      <BottomNav />
    </div>
  );
}
